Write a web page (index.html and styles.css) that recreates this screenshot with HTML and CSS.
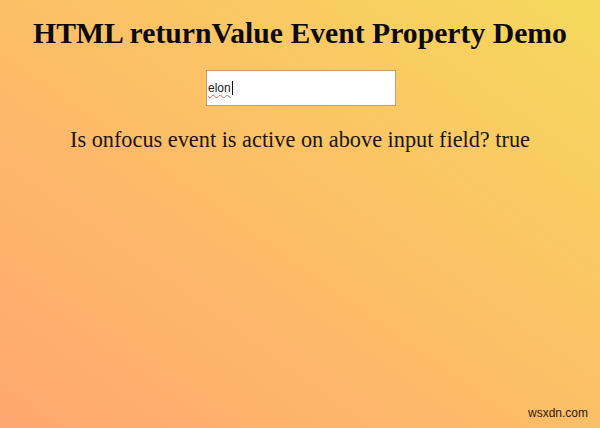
FILE: index.html
```html
<!DOCTYPE html>
<html>
<head>
<meta charset="utf-8">
<link rel="stylesheet" href="styles.css">
</head>
<body>
<main class="page">
  <h1 class="title">HTML returnValue Event Property Demo</h1>
  <div class="field-row">
    <div class="field"><span class="typed">elon</span><span class="caret"></span></div>
  </div>
  <p class="result">Is onfocus event is active on above input field? true</p>
</main>
<div class="watermark">wsxdn.com</div>
</body>
</html>
```
FILE: styles.css
```css
html, body {
  margin: 0;
  padding: 0;
  width: 600px;
  height: 428px;
  overflow: hidden;
}
body {
  background: linear-gradient(to top right, #ffa76f 0%, #fdbc68 45%, #f5d95d 100%);
  font-family: "Liberation Serif", "Times New Roman", serif;
  color: #111;
  position: relative;
}
.page {
  display: flex;
  flex-direction: column;
  align-items: center;
  padding-top: 16px;
}
.title {
  margin: 0;
  font-size: 29.7px;
  font-weight: bold;
  line-height: 34px;
  color: #0d0b08;
}
.field-row {
  margin-top: 20px;
  padding-left: 2px;
}
.field {
  width: 187px;
  height: 34px;
  background: #fff;
  border: 1px solid #d79a66;
  box-sizing: content-box;
  display: flex;
  align-items: center;
  padding-left: 1px;
  font-family: "Liberation Sans", Arial, sans-serif;
  font-size: 12px;
  color: #222;
}
.typed {
  text-decoration: underline wavy #d56a6a;
  text-decoration-thickness: 1px;
  text-underline-offset: 2px;
}
.caret {
  display: inline-block;
  width: 1px;
  height: 14px;
  background: #111;
  margin-left: 1px;
}
.result {
  margin: 21px 0 0 0;
  font-size: 22.3px;
  line-height: 25px;
  color: #1a1610;
}
.watermark {
  position: absolute;
  right: 12px;
  bottom: 8px;
  font-family: "Liberation Sans", Arial, sans-serif;
  font-size: 12px;
  color: #2a2010;
}
```
